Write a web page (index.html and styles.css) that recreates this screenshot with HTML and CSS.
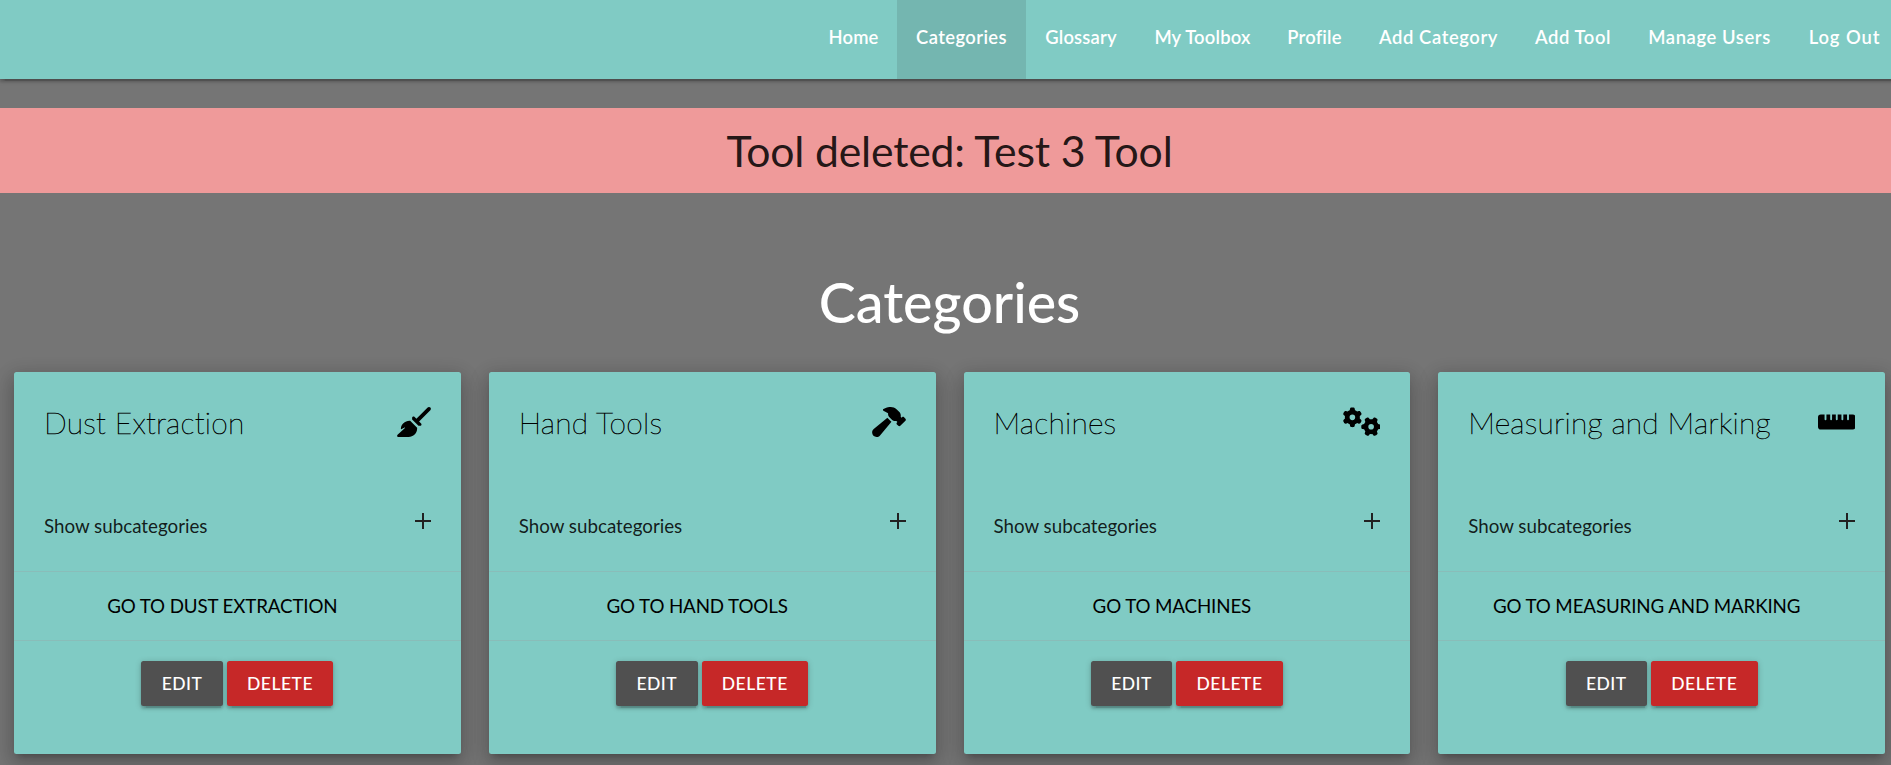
FILE: index.html
```html
<!DOCTYPE html>
<html lang="en">
<head>
<meta charset="utf-8">
<title>Categories</title>
<link rel="stylesheet" href="styles.css">
</head>
<body>
<svg class="defs" width="0" height="0" aria-hidden="true">
  <symbol id="broom" viewBox="0 0 576 512"><path d="M566.6 54.6c12.5-12.5 12.5-32.8 0-45.3s-32.8-12.5-45.3 0l-192 192-34.7-34.7c-4.2-4.2-10-6.6-16-6.6c-12.5 0-22.6 10.1-22.6 22.6l0 29.1L364.3 320l29.1 0c12.5 0 22.6-10.1 22.6-22.6c0-6-2.4-11.8-6.6-16l-34.7-34.7 192-192zM341.1 353.4L222.6 234.9c-42.7-3.7-85.2 11.7-115.8 42.3l-8 8C76.5 307.5 64 337.7 64 369.2c0 6.8 7.1 11.2 13.2 8.2l51.1-25.5c5-2.5 9.5 4.1 5.4 7.9L7.3 473.4C2.7 477.6 0 483.6 0 489.9C0 502.1 9.9 512 22.1 512l173.3 0c38.8 0 75.9-15.4 103.4-42.8c30.6-30.6 45.9-73.1 42.3-115.8z"/></symbol>
  <symbol id="hammer" viewBox="0 0 576 512"><path d="M413.5 237.5c-28.2 4.8-58.2-3.6-80-25.4l-38.1-38.1C280.4 159 272 138.8 272 117.6l0-12.1L192.3 62c-5.3-2.9-8.6-8.6-8.3-14.7s3.9-11.5 9.5-14l47.2-21C259.1 4.2 279 0 299.2 0l18.1 0c36.7 0 72 14 98.7 39.1l44.6 42c24.2 22.8 33.2 55.7 26.6 86L503 183l8-8c9.4-9.4 24.6-9.4 33.9 0l24 24c9.4 9.4 9.4 24.6 0 33.9l-88 88c-9.4 9.4-24.6 9.4-33.9 0l-24-24c-9.4-9.4-9.4-24.6 0-33.9l8-8-17.5-17.5zM27.4 377.1L260.9 182.6c3.5 4.9 7.5 9.6 11.8 14l38.1 38.1c6 6 12.4 11.2 19.2 15.7L134.9 484.6c-14.5 17.4-36 27.4-58.6 27.4C34.1 512 0 477.8 0 435.7c0-22.6 10.1-44.1 27.4-58.6z"/></symbol>
  <symbol id="gears" viewBox="0 0 640 512"><path id="gear" d="M308.5 135.3c7.1-6.3 9.9-16.2 6.2-25c-2.3-5.3-4.8-10.5-7.6-15.5L304 89.4c-3-5-6.3-9.9-9.8-14.6c-5.7-7.6-15.7-10.1-24.7-7.1l-28.2 9.3c-10.7-8.8-23-16-36.2-20.9L199 27.1c-1.9-9.3-9.1-16.7-18.5-17.8C173.9 8.4 167.2 8 160.4 8l-.7 0c-6.8 0-13.5 .4-20.1 1.2c-9.4 1.1-16.6 8.6-18.5 17.8L115 56.1c-13.3 5-25.5 12.1-36.2 20.9L50.5 67.8c-9-3-19-.5-24.7 7.1c-3.5 4.7-6.8 9.6-9.9 14.6l-3 5.3c-2.8 5-5.3 10.2-7.6 15.6c-3.7 8.7-.9 18.6 6.2 25l22.2 19.8C32.6 161.9 32 168.9 32 176s.6 14.1 1.7 20.9L11.5 216.7c-7.1 6.3-9.9 16.2-6.2 25c2.3 5.3 4.8 10.5 7.6 15.6l3 5.2c3 5.1 6.3 9.9 9.9 14.6c5.7 7.6 15.7 10.1 24.7 7.1l28.2-9.3c10.7 8.8 23 16 36.2 20.9l6.1 29.1c1.9 9.3 9.1 16.7 18.5 17.8c6.7 .8 13.5 1.2 20.4 1.2s13.7-.4 20.4-1.2c9.4-1.1 16.6-8.6 18.5-17.8l6.1-29.1c13.3-5 25.5-12.1 36.2-20.9l28.2 9.3c9 3 19 .5 24.7-7.1c3.5-4.7 6.8-9.5 9.8-14.6l3.1-5.4c2.8-5 5.3-10.2 7.6-15.5c3.7-8.7 .9-18.6-6.2-25l-22.2-19.8c1.1-6.8 1.7-13.8 1.7-20.9s-.6-14.1-1.7-20.9l22.2-19.8zM112 176a48 48 0 1 1 96 0 48 48 0 1 1 -96 0z"/><use href="#gear" transform="translate(480 336) rotate(90) translate(-160 -176)"/></symbol>
  <symbol id="ruler" viewBox="0 0 640 512"><path d="M0 336a48 48 0 0 0 48 48H592a48 48 0 0 0 48-48V176a48 48 0 0 0-48-48H528v80a16 16 0 0 1-32 0V128H432v80a16 16 0 0 1-32 0V128H336v80a16 16 0 0 1-32 0V128H240v80a16 16 0 0 1-32 0V128H144v80a16 16 0 0 1-32 0V128H48a48 48 0 0 0-48 48z"/></symbol>
  <symbol id="plus" viewBox="0 0 16 16"><path d="M0 7h7V0h2v7h7v2H9v7H7V9H0z"/></symbol>
</svg>
<div class="page">
  <nav class="navbar">
    <a class="nav-home">Home</a>
    <a class="nav-categories active">Categories</a>
    <a class="nav-glossary">Glossary</a>
    <a class="nav-toolbox">My Toolbox</a>
    <a class="nav-profile">Profile</a>
    <a class="nav-add-category">Add Category</a>
    <a class="nav-add-tool">Add Tool</a>
    <a class="nav-users">Manage Users</a>
    <a class="nav-logout">Log Out</a>
  </nav>
  <h4 class="flash">Tool deleted: Test 3 Tool</h4>
  <h3 class="heading">Categories</h3>
  <main class="cards">
    <section class="card">
      <div class="card-title"><span>Dust Extraction</span><svg class="icon"><use href="#broom"/></svg></div>
      <div class="reveal"><span>Show subcategories</span><svg class="plus"><use href="#plus"/></svg></div>
      <div class="action"><a class="go">Go to Dust Extraction</a></div>
      <div class="action buttons"><a class="btn edit">Edit</a><a class="btn delete">Delete</a></div>
    </section>
    <section class="card">
      <div class="card-title"><span>Hand Tools</span><svg class="icon"><use href="#hammer"/></svg></div>
      <div class="reveal"><span>Show subcategories</span><svg class="plus"><use href="#plus"/></svg></div>
      <div class="action"><a class="go">Go to Hand Tools</a></div>
      <div class="action buttons"><a class="btn edit">Edit</a><a class="btn delete">Delete</a></div>
    </section>
    <section class="card">
      <div class="card-title"><span>Machines</span><svg class="icon wide"><use href="#gears"/></svg></div>
      <div class="reveal"><span>Show subcategories</span><svg class="plus"><use href="#plus"/></svg></div>
      <div class="action"><a class="go">Go to Machines</a></div>
      <div class="action buttons"><a class="btn edit">Edit</a><a class="btn delete">Delete</a></div>
    </section>
    <section class="card">
      <div class="card-title"><span>Measuring and Marking</span><svg class="icon wide"><use href="#ruler"/></svg></div>
      <div class="reveal"><span>Show subcategories</span><svg class="plus"><use href="#plus"/></svg></div>
      <div class="action"><a class="go">Go to Measuring and Marking</a></div>
      <div class="action buttons"><a class="btn edit">Edit</a><a class="btn delete">Delete</a></div>
    </section>
  </main>
</div>
</body>
</html>
```
FILE: styles.css
```css
* { box-sizing: border-box; }
html { overflow: hidden; }
body { margin: 0; background: #757575; font: 400 18.75px/1.5 Lato, sans-serif; color: rgba(0,0,0,.87); overflow: hidden; height: 765px; }
.defs { display: none; }
.page { width: 1899px; }
.navbar { display: flex; justify-content: flex-end; height: 79px; background: #80cbc4; box-shadow: 0 2.5px 2.5px rgba(0,0,0,.14), 0 4px 1px -2.5px rgba(0,0,0,.12), 0 1px 6px rgba(0,0,0,.2); }
.navbar a { color: #fff; font-weight: 600; font-size: 18.4px; line-height: 74px; letter-spacing: .4px; text-align: center; white-space: nowrap; }
.navbar .active { background: #74b6b0; }
.nav-home { width: 87px; }
.nav-categories { width: 129px; }
.nav-glossary { width: 110px; }
.nav-toolbox { width: 133px; }
.nav-profile { width: 91px; }
.nav-add-category { width: 157px; }
.nav-add-tool { width: 112px; }
.nav-users { width: 161px; }
.nav-logout { width: 109px; }
.navbar .nav-home, .navbar .nav-glossary, .navbar .nav-toolbox, .navbar .nav-profile { letter-spacing: .2px; }
.navbar .nav-add-category, .navbar .nav-add-tool, .navbar .nav-users { letter-spacing: .6px; }
.navbar .nav-logout { letter-spacing: .9px; }
.flash { margin: 29px 0 0; height: 85px; background: #ef9a9a; font-weight: 400; font-size: 42.75px; line-height: 85px; letter-spacing: -.2px; text-align: center; }
.heading { margin: 76px 0 0; height: 103px; font-weight: 500; font-size: 55.6px; line-height: 66px; color: #fff; text-align: center; }
.cards { display: grid; grid-template-columns: repeat(4, 1fr); gap: 28px; padding: 0 14px; }
.card { height: 382px; background: #80cbc4; border-radius: 2.5px; box-shadow: 0 10px 21px 2.5px rgba(0,0,0,.14), 0 4px 18px 2.5px rgba(0,0,0,.12), 0 6px 6px -4px rgba(0,0,0,.2); }
.card-title { display: flex; justify-content: space-between; height: 120px; padding: 30px 30px 0; font-size: 30px; line-height: 40px; font-weight: 100; letter-spacing: .2px; -webkit-text-stroke: .55px #000; color: #000; }
.icon { width: 34px; height: 30px; margin-top: 5px; fill: #000; -webkit-text-stroke: 0; }
.icon.wide { width: 37.5px; }
.reveal { display: flex; justify-content: space-between; height: 79px; padding: 20px 30px 0; }
.plus { width: 16px; height: 16px; margin-top: 1px; fill: #212121; }
.action { height: 69px; padding: 20px 30px; border-top: 1px solid rgba(160,160,160,.3); text-align: center; white-space: nowrap; }
.go { margin-right: 30px; color: #000; letter-spacing: -.13px; text-transform: uppercase; }
.buttons { display: flex; justify-content: center; gap: 4px; height: 114px; }
.btn { height: 45px; padding: 0 20.3px; border-radius: 2.5px; color: #fff; font-size: 17.5px; font-weight: 500; line-height: 45px; letter-spacing: .5px; text-transform: uppercase; box-shadow: 0 2.5px 2.5px rgba(0,0,0,.14), 0 4px 1px -2.5px rgba(0,0,0,.12), 0 1px 6px rgba(0,0,0,.2); }
.edit { background: #505050; }
.delete { background: #c62828; }
```
